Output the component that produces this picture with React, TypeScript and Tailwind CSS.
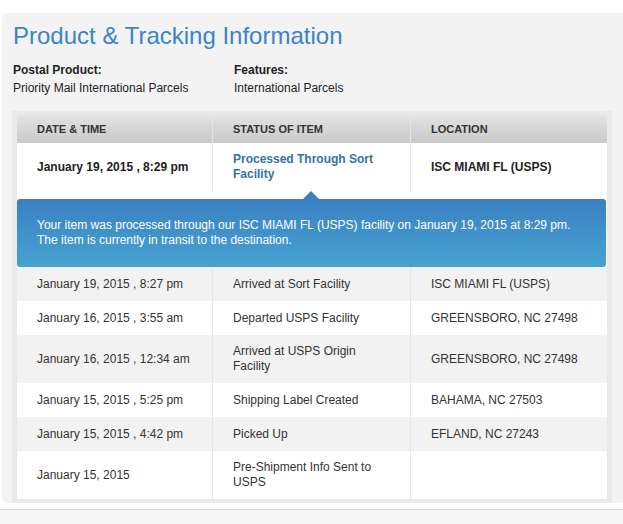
import React from "react";

type Row = { date: string; status: string; location: string; gray: boolean; tall?: boolean };

const rows: Row[] = [
  { date: "January 19, 2015 , 8:27 pm", status: "Arrived at Sort Facility", location: "ISC MIAMI FL (USPS)", gray: true },
  { date: "January 16, 2015 , 3:55 am", status: "Departed USPS Facility", location: "GREENSBORO, NC 27498", gray: false },
  { date: "January 16, 2015 , 12:34 am", status: "Arrived at USPS Origin Facility", location: "GREENSBORO, NC 27498", gray: true, tall: true },
  { date: "January 15, 2015 , 5:25 pm", status: "Shipping Label Created", location: "BAHAMA, NC 27503", gray: false },
  { date: "January 15, 2015 , 4:42 pm", status: "Picked Up", location: "EFLAND, NC 27243", gray: true },
  { date: "January 15, 2015", status: "Pre-Shipment Info Sent to USPS", location: "", gray: false, tall: true },
];

export default function App() {
  return (
    <div
      className="w-[623px] h-[524px] bg-white flex flex-col overflow-hidden text-[#333]"
      style={{ fontFamily: '"Liberation Sans", Arial, sans-serif' }}
    >
      <div className="h-[13px] shrink-0" />
      <div className="ml-[2px] bg-[#f4f3f4] rounded-tl-[6px] rounded-bl-[6px] pt-[9px] flex flex-col">
        <h1 className="pl-[11px] text-[24px] leading-[28px] text-[#3b84c7] font-normal">
          Product &amp; Tracking Information
        </h1>
        <div className="pl-[11px] mt-[11px] flex text-[12px] leading-[18px] text-[#222]">
          <div className="w-[221px]">
            <div className="font-bold">Postal Product:</div>
            <div>Priority Mail International Parcels</div>
          </div>
          <div>
            <div className="font-bold">Features:</div>
            <div>International Parcels</div>
          </div>
        </div>
        <div className="mt-[14px] ml-[10px] mr-[11px] bg-[#e9e9e9] px-[5px] py-[4px]">
          <div className="bg-white flex flex-col">
            {/* header */}
            <div className="grid grid-cols-[195px_198px_1fr] h-[28px] bg-gradient-to-b from-[#e3e3e3] to-[#c9c9c9] text-[11px] font-bold text-[#333] uppercase">
              <div className="pl-[20px] flex items-center">Date &amp; Time</div>
              <div className="pl-[20px] flex items-center border-l border-[#e4e4e4]">Status of Item</div>
              <div className="pl-[20px] flex items-center border-l border-[#e4e4e4]">Location</div>
            </div>
            {/* active row */}
            <div className="grid grid-cols-[195px_198px_1fr] h-[48px] text-[12px] leading-[15px] font-bold text-[#222]">
              <div className="pl-[20px] flex items-center">January 19, 2015 , 8:29 pm</div>
              <div className="pl-[20px] pr-[20px] flex items-center border-l border-[#e6e6e6] text-[#3470ae]">
                Processed Through Sort Facility
              </div>
              <div className="pl-[20px] flex items-center border-l border-[#e6e6e6]">ISC MIAMI FL (USPS)</div>
            </div>
            {/* arrow band */}
            <div className="grid grid-cols-[195px_198px_1fr] h-[8px]">
              <div />
              <div className="flex justify-center items-end">
                <svg width="16" height="8" viewBox="0 0 16 8" className="block">
                  <polygon points="0,8 8,0 16,8" fill="#3a80c3" />
                </svg>
              </div>
              <div />
            </div>
            {/* detail box */}
            <div className="mr-[1px] h-[68px] rounded-[3px] bg-gradient-to-b from-[#3a80c3] to-[#47a3d0] flex items-center px-[20px] text-[12px] leading-[15px] text-white">
              <p>
                Your item was processed through our ISC MIAMI FL (USPS) facility on January 19, 2015 at 8:29 pm.
                <br />
                The item is currently in transit to the destination.
              </p>
            </div>
            {rows.map((r, i) => (
              <div
                key={i}
                className={`grid grid-cols-[195px_198px_1fr] text-[12px] leading-[15px] text-[#333] ${
                  r.tall ? "h-[48px]" : "h-[34px]"
                } ${r.gray ? "bg-[#f2f2f2]" : "bg-white"}`}
              >
                <div className="pl-[20px] flex items-center">{r.date}</div>
                <div className="pl-[20px] pr-[30px] flex items-center border-l border-[#e6e6e6]">{r.status}</div>
                <div className="pl-[20px] flex items-center border-l border-[#e6e6e6]">{r.location}</div>
              </div>
            ))}
          </div>
        </div>
      </div>
      <div className="h-[6px] shrink-0" />
      <div className="h-px bg-[#d9d9d9] shrink-0" />
      <div className="flex-1 bg-[#f6f6f6]" />
    </div>
  );
}
